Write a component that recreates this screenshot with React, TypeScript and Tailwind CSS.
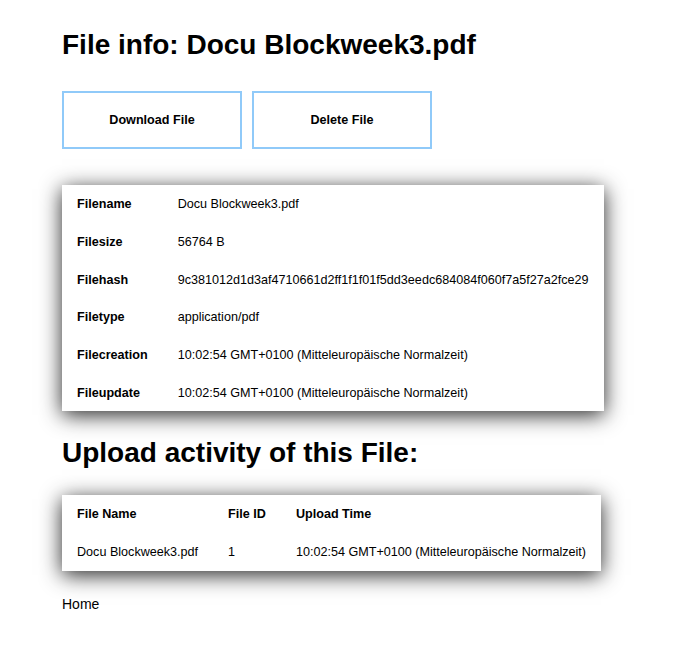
import React from "react";

const info: [string, string][] = [
  ["Filename", "Docu Blockweek3.pdf"],
  ["Filesize", "56764 B"],
  ["Filehash", "9c381012d1d3af4710661d2ff1f1f01f5dd3eedc684084f060f7a5f27a2fce29"],
  ["Filetype", "application/pdf"],
  ["Filecreation", "10:02:54 GMT+0100 (Mitteleuropäische Normalzeit)"],
  ["Fileupdate", "10:02:54 GMT+0100 (Mitteleuropäische Normalzeit)"],
];

export default function App() {
  return (
    <div
      className="min-h-[670px] bg-white text-black pl-[62px] pt-[29px]"
      style={{ fontFamily: '"Liberation Sans", Arial, sans-serif' }}
    >
      <h1 className="text-[28px] font-bold leading-[32px]">File info: Docu Blockweek3.pdf</h1>
      <div className="mt-[30px] flex gap-[10px]">
        <button className="w-[180px] h-[58px] border-2 border-[#90caf9] bg-white text-[12.6px] font-bold">
          Download File
        </button>
        <button className="w-[180px] h-[58px] border-2 border-[#90caf9] bg-white text-[12.6px] font-bold">
          Delete File
        </button>
      </div>
      <div className="mt-[36px] w-fit bg-white shadow-[0_4px_20px_rgba(0,0,0,0.85)]">
        <table className="border-collapse text-[12.6px]">
          <tbody>
            {info.map(([k, v]) => (
              <tr key={k} className="h-[37.7px]">
                <td className="px-[15px] pt-[2px] font-bold align-middle">{k}</td>
                <td className="px-[15px] pt-[2px] align-middle">{v}</td>
              </tr>
            ))}
          </tbody>
        </table>
      </div>
      <h2 className="mt-[26px] text-[28px] font-bold leading-[32px]">Upload activity of this File:</h2>
      <div className="mt-[26px] w-fit bg-white shadow-[0_4px_20px_rgba(0,0,0,0.85)]">
        <table className="border-collapse text-[12.6px]">
          <thead>
            <tr className="h-[38px]">
              <th className="px-[15px] font-bold text-left">File Name</th>
              <th className="px-[15px] font-bold text-left">File ID</th>
              <th className="px-[15px] font-bold text-left">Upload Time</th>
            </tr>
          </thead>
          <tbody>
            <tr className="h-[38px]">
              <td className="px-[15px]">Docu Blockweek3.pdf</td>
              <td className="px-[15px]">1</td>
              <td className="px-[15px]">10:02:54 GMT+0100 (Mitteleuropäische Normalzeit)</td>
            </tr>
          </tbody>
        </table>
      </div>
      <div className="mt-[25px] text-[14px] leading-[16px]">Home</div>
    </div>
  );
}
